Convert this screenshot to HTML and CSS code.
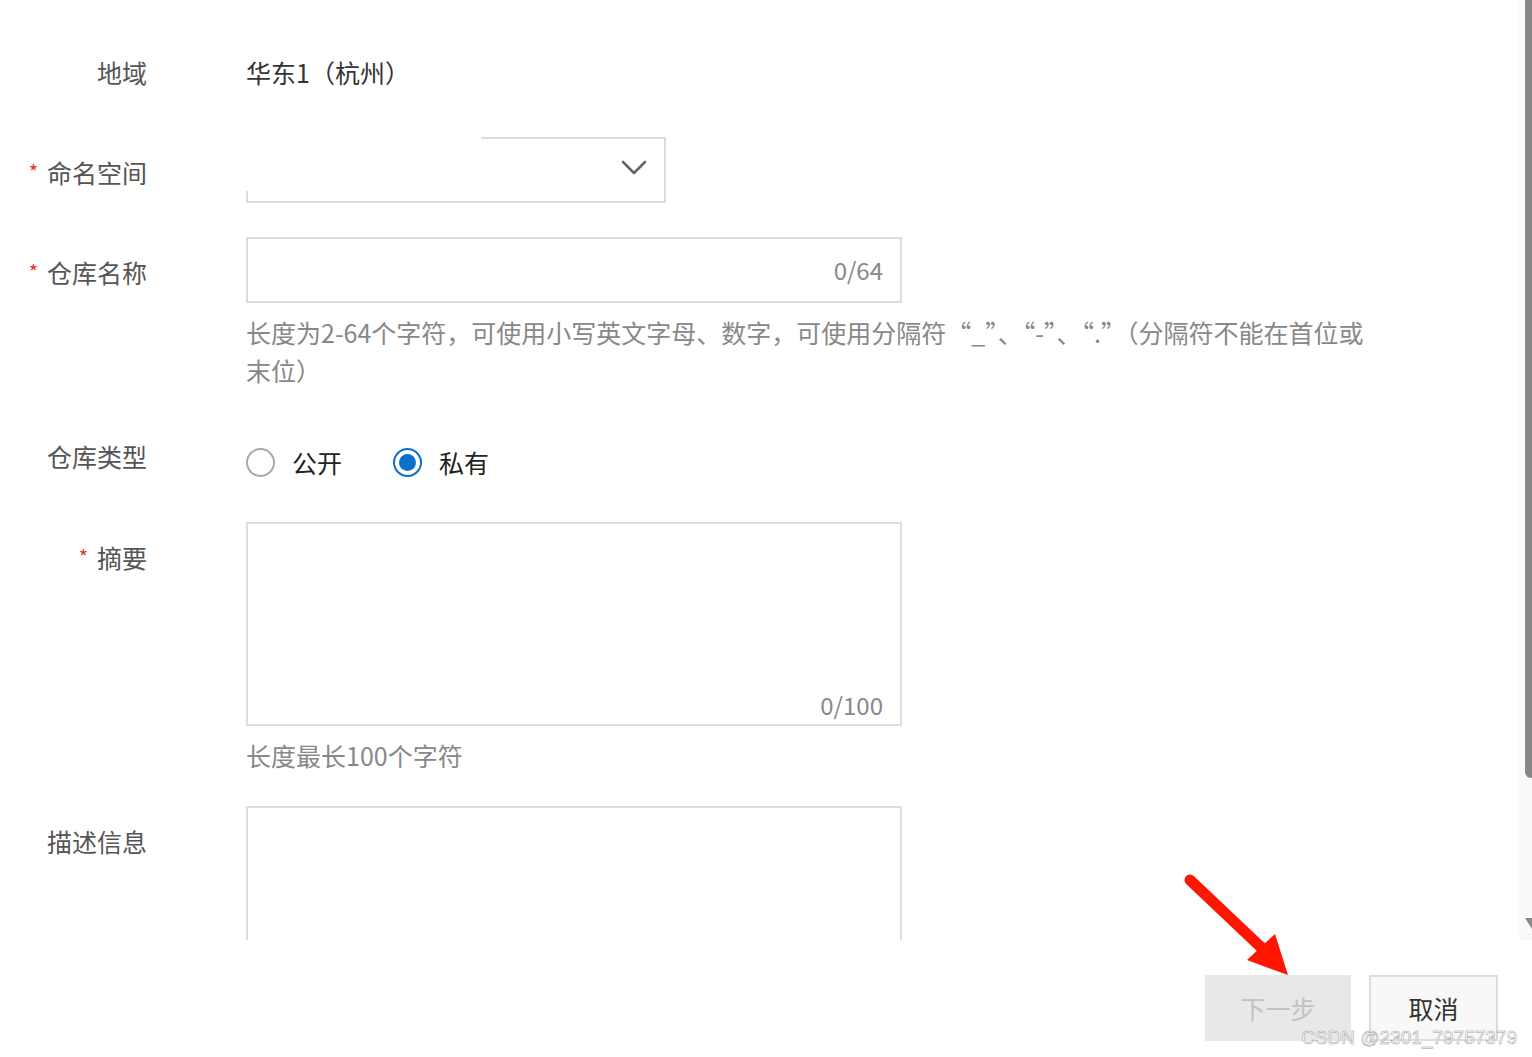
FILE: index.html
```html
<!DOCTYPE html>
<html>
<head>
    <meta charset="utf-8">
    <title>创建镜像仓库</title>
    <link rel="stylesheet" href="styles.css">
</head>
<body>
    <div class="dialog">
        <div class="dialog-body">
            <form class="repo-form">
                <div class="form-row">
                    <label class="form-label">地域</label>
                    <div class="form-control">
                        <span class="static-value">华东1（杭州）</span>
                    </div>
                </div>
                <div class="form-row">
                    <label class="form-label"><span class="required">*</span>命名空间</label>
                    <div class="form-control">
                        <div class="select-box">
                            <svg class="chevron" width="26" height="16" viewBox="0 0 26 16">
                                <polyline points="2,2 13,13 24,2" fill="none" stroke="#666" stroke-width="2.6" stroke-linecap="round" stroke-linejoin="round"/>
                            </svg>
                        </div>
                    </div>
                </div>
                <div class="form-row has-help">
                    <label class="form-label"><span class="required">*</span>仓库名称</label>
                    <div class="form-control">
                        <div class="text-input"><span class="counter">0/64</span></div>
                        <div class="help-text">长度为2-64个字符，可使用小写英文字母、数字，可使用分隔符“_”、“-”、“.”（分隔符不能在首位或末位）</div>
                    </div>
                </div>
                <div class="form-row radio-row">
                    <label class="form-label">仓库类型</label>
                    <div class="form-control">
                        <div class="radio-group">
                            <label class="radio"><span class="radio-dot"></span>公开</label>
                            <label class="radio checked"><span class="radio-dot"></span>私有</label>
                        </div>
                    </div>
                </div>
                <div class="form-row has-help">
                    <label class="form-label"><span class="required">*</span>摘要</label>
                    <div class="form-control">
                        <div class="text-area"><span class="counter">0/100</span></div>
                        <div class="help-text">长度最长100个字符</div>
                    </div>
                </div>
                <div class="form-row">
                    <label class="form-label">描述信息</label>
                    <div class="form-control">
                        <div class="text-area"></div>
                    </div>
                </div>
            </form>
            <div class="scrollbar">
                <div class="scroll-thumb"></div>
                <div class="scroll-arrow"></div>
            </div>
        </div>
        <div class="dialog-footer">
            <button class="btn btn-disabled" disabled>下一步</button>
            <button class="btn">取消</button>
        </div>

        <svg class="annot-arrow" width="120" height="115" viewBox="0 0 120 115">
            <line x1="10" y1="10" x2="86" y2="82" stroke="#ff1500" stroke-width="11" stroke-linecap="round"/>
            <polygon points="67,90 95,64 108,105" fill="#ff1500"/>
        </svg>
        <div class="watermark">CSDN @2301_79757379</div>
    </div>
</body>
</html>
```

FILE: styles.css
```css
body {
    margin: 0;
    background-color: #fff;
    font-family: "Noto Sans CJK SC", "Noto Sans", sans-serif;
    overflow: hidden;
}

.dialog {
    position: relative;
    width: 1532px;
    height: 1057px;
}

.dialog-body {
    display: flex;
    height: 940px;
    overflow: hidden;
}

.repo-form {
    flex: 1;
    padding-top: 37px;
}

.form-row {
    display: grid;
    grid-template-columns: 147px 1fr;
    column-gap: 99px;
    margin-bottom: 34px;
}

.form-row.has-help {
    margin-bottom: 32px;
}

.form-label {
    text-align: right;
    padding-top: 16px;
    font-size: 25px;
    line-height: 38px;
    color: #555;
    white-space: nowrap;
}

.required {
    color: #e0342b;
    font-size: 20px;
    margin-right: 9px;
    vertical-align: 3px;
}

.form-control {
    min-height: 66px;
}

.radio-row .form-control {
    min-height: 67px;
}

.static-value {
    display: block;
    padding-top: 16px;
    font-size: 25px;
    line-height: 38px;
    color: #333;
}

/* select box - top/left border is broken in the screenshot */
.select-box {
    box-sizing: border-box;
    width: 420px;
    height: 66px;
    border-right: 2px solid #dcdcdc;
    border-bottom: 2px solid #dcdcdc;
    background:
        linear-gradient(#dcdcdc, #dcdcdc) right top / 183px 2px no-repeat,
        linear-gradient(#dcdcdc, #dcdcdc) left bottom / 2px 10px no-repeat;
    display: flex;
    align-items: center;
    justify-content: flex-end;
    padding-right: 17px;
}

.chevron {
    margin-top: -2px;
}

.text-input {
    box-sizing: border-box;
    width: 656px;
    height: 66px;
    border: 2px solid #dcdcdc;
    display: flex;
    align-items: center;
    justify-content: flex-end;
    padding: 0 17px;
}

.text-area {
    box-sizing: border-box;
    width: 656px;
    height: 204px;
    border: 2px solid #dcdcdc;
    display: flex;
    align-items: flex-end;
    justify-content: flex-end;
    padding: 0 17px 4px;
}

.counter {
    font-size: 24px;
    line-height: 30px;
    color: #888;
}

.help-text {
    margin-top: 10px;
    max-width: 1125px;
    font-size: 25px;
    line-height: 38px;
    color: #888;
}

.radio-group {
    display: flex;
    padding-top: 22px;
    gap: 51px;
}

.radio {
    display: flex;
    align-items: center;
    gap: 17px;
    font-size: 25px;
    line-height: 38px;
    color: #222;
}

.radio-dot {
    box-sizing: border-box;
    width: 29px;
    height: 29px;
    border: 2px solid #aaa;
    border-radius: 50%;
    display: flex;
    align-items: center;
    justify-content: center;
}

.radio.checked .radio-dot {
    border-color: #0b6fcc;
}

.radio.checked .radio-dot::after {
    content: "";
    width: 17px;
    height: 17px;
    border-radius: 50%;
    background-color: #0b6fcc;
}

.scrollbar {
    width: 13px;
    background-color: #f9f9f9;
    display: flex;
    flex-direction: column;
    align-items: flex-end;
}

.scroll-thumb {
    width: 7px;
    height: 778px;
    background-color: #878787;
    border-bottom-left-radius: 6px;
}

.scroll-arrow {
    margin-top: 140px;
    width: 0;
    height: 0;
    border-left: 7px solid transparent;
    border-top: 11px solid #8a8a8a;
}

.dialog-footer {
    display: flex;
    justify-content: flex-end;
    gap: 18px;
    padding: 35px 34px 0 0;
}

.btn {
    box-sizing: border-box;
    width: 129px;
    height: 66px;
    border: 2px solid #dcdcdc;
    background-color: #f8f8f8;
    font-family: inherit;
    font-size: 25px;
    color: #333;
    padding: 0;
}

.btn-disabled {
    width: 146px;
    border: none;
    background-color: #e8e8e8;
    color: #c2c2c2;
}

.annot-arrow {
    position: absolute;
    left: 1180px;
    top: 870px;
}

.watermark {
    position: absolute;
    right: 15px;
    bottom: 8px;
    font-family: "Liberation Sans", Arial, sans-serif;
    font-size: 19px;
    color: #fff;
    -webkit-text-stroke: 0.5px #999;
}
```
